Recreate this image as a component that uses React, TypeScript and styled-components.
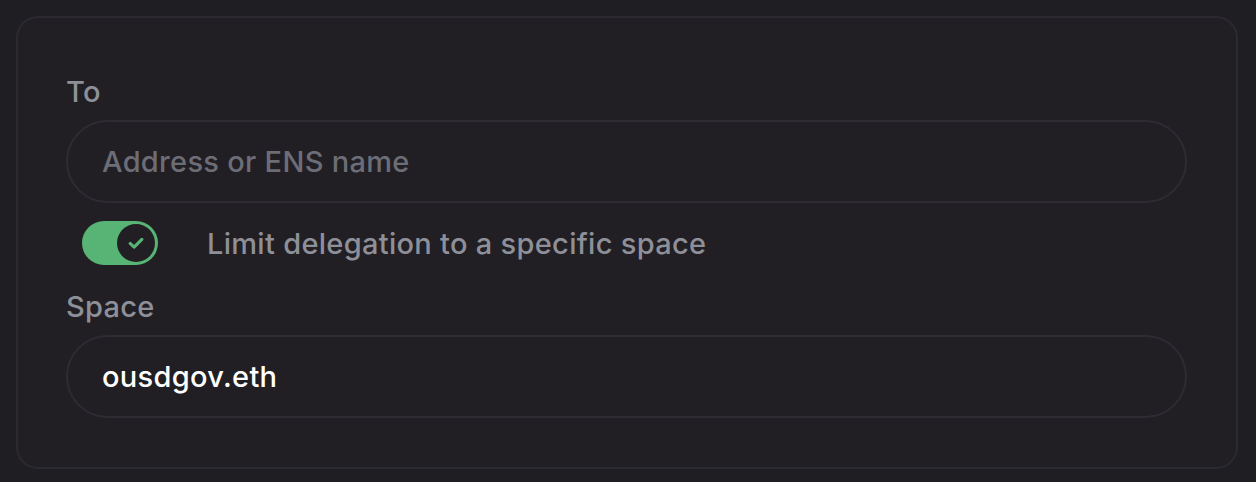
import React from "react";
import styled, { createGlobalStyle } from "styled-components";

const Global = createGlobalStyle`
  html, body { margin: 0; padding: 0; background: #1f1e23; }
  body { font-family: Inter, "Open Sans", sans-serif; -webkit-font-smoothing: antialiased; }
  * { box-sizing: border-box; }
`;

const Page = styled.div`
  padding: 16px 18px 14px 16px;
  width: 1256px;
  height: 482px;
`;

const Card = styled.div`
  border: 2px solid #2b2a30;
  border-radius: 22px;
  background: #211f24;
  padding: 56px 49px 49px 48px;
  display: flex;
  flex-direction: column;
`;

const Label = styled.label`
  font-size: 29px;
  line-height: 36px;
  letter-spacing: 0.3px;
  color: #8e9099;
  font-weight: 500;
  margin-bottom: 10px;
`;

const Input = styled.input`
  height: 83px;
  border-radius: 42px;
  border: 2px solid #2d2c32;
  background: transparent;
  padding: 0 34px;
  font-family: Inter, "Open Sans", sans-serif;
  font-size: 29px;
  letter-spacing: 0.3px;
  font-weight: 500;
  color: #ffffff;
  outline: none;
  &::placeholder { color: #6c6d76; }
`;

const ToggleRow = styled.div`
  display: flex;
  align-items: center;
  gap: 49px;
  padding-left: 16px;
  margin: 18px 0 24px;
`;

const Track = styled.div`
  width: 76px;
  height: 44px;
  border-radius: 22px;
  background: #57b474;
  display: flex;
  align-items: center;
  justify-content: flex-end;
  padding-right: 3px;
`;

const Knob = styled.div`
  width: 38px;
  height: 38px;
  border-radius: 50%;
  background: #211f24;
  display: flex;
  align-items: center;
  justify-content: center;
`;

const ToggleText = styled.span`
  font-size: 29px;
  letter-spacing: 0.3px;
  font-weight: 500;
  color: #8e9099;
`;

export default function App() {
  return (
    <Page>
      <Global />
      <Card>
        <Label>To</Label>
        <Input placeholder="Address or ENS name" />
        <ToggleRow>
          <Track>
            <Knob>
              <svg width="18" height="18" viewBox="0 0 16 16" fill="none">
                <path d="M2.8 8.4 L6.3 11.6 L13.2 4.8" stroke="#57b474" strokeWidth="2.8" strokeLinecap="round" strokeLinejoin="round" />
              </svg>
            </Knob>
          </Track>
          <ToggleText>Limit delegation to a specific space</ToggleText>
        </ToggleRow>
        <Label>Space</Label>
        <Input defaultValue="ousdgov.eth" />
      </Card>
    </Page>
  );
}
